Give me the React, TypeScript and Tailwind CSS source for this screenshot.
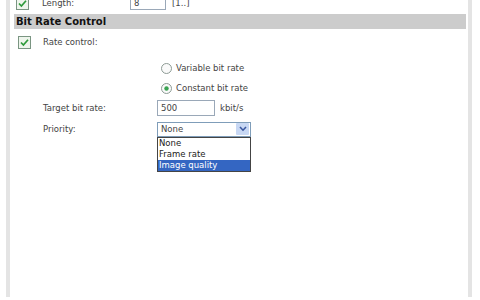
import React from "react";

function CheckBox() {
  return (
    <svg width="13" height="13" viewBox="0 0 13 13" className="shrink-0">
      <rect x="0.5" y="0.5" width="12" height="12" fill="#eef5ec" stroke="#7a9582" />
      <path d="M3 6.5 L5.4 9 L10 3.8" fill="none" stroke="#2d9a3a" strokeWidth="1.7" />
    </svg>
  );
}

function Radio({ checked }: { checked?: boolean }) {
  return (
    <svg width="11" height="11" viewBox="0 0 11 11" className="shrink-0">
      <circle cx="5.5" cy="5.5" r="5" fill="#fafafa" stroke="#8c9a94" />
      {checked && <circle cx="5.5" cy="5.5" r="2.2" fill="#3aa352" />}
    </svg>
  );
}

export default function App() {
  return (
    <div className="w-[480px] h-[300px] overflow-hidden bg-white font-['DejaVu_Sans',sans-serif] text-[8.5px] text-[#444]">
      <div className="ml-[6px] h-full w-[466px] border-x-[4px] border-[#e4e4e4] pl-[4px] pr-[2px]">
        {/* row scrolled partly out of view */}
        <div className="-mt-[3px] flex h-[13px] items-center">
          <div className="ml-[2px]">
            <CheckBox />
          </div>
          <span className="ml-[13px] w-[88px]">Length:</span>
          <div className="flex h-[13px] w-[36px] items-center border border-[#9aa8b8] px-[3px]">8</div>
          <span className="ml-[6px]">[1..]</span>
        </div>

        <div className="mt-[4px] flex h-[15px] items-center bg-[#cccccc] px-[2px] text-[10px] font-bold text-[#111]">
          Bit Rate Control
        </div>

        <div className="mt-[6px] flex h-[14px] items-center">
          <div className="ml-[4px]">
            <CheckBox />
          </div>
          <span className="ml-[12px]">Rate control:</span>
        </div>

        <div className="mt-[12px] flex h-[14px] items-center pl-[147px]">
          <Radio />
          <span className="ml-[4px]">Variable bit rate</span>
        </div>
        <div className="mt-[6px] flex h-[14px] items-center pl-[147px]">
          <Radio checked />
          <span className="ml-[4px]">Constant bit rate</span>
        </div>

        <div className="mt-[5px] flex h-[16px] items-center">
          <span className="ml-[29px] w-[114px]">Target bit rate:</span>
          <div className="flex h-[16px] w-[58px] items-center border border-[#9aa8b8] px-[3px]">500</div>
          <span className="ml-[5px]">kbit/s</span>
        </div>

        <div className="mt-[5px] flex h-[16px] items-center">
          <span className="ml-[29px] w-[114px]">Priority:</span>
          <div className="relative w-[94px]">
            <div className="flex h-[15px] items-center justify-between border border-[#7f9db9] pl-[3px] pr-[1px]">
              <span>None</span>
              <div className="flex h-[12px] w-[13px] items-center justify-center rounded-[1px] bg-[#c8d8f4]">
                <svg width="8" height="6" viewBox="0 0 8 6">
                  <path d="M1 1 L4 4.2 L7 1" fill="none" stroke="#3a57a0" strokeWidth="1.6" />
                </svg>
              </div>
            </div>
            <div className="absolute left-0 top-full w-[94px] border border-[#444] bg-white text-[#222]">
              <div className="h-[11px] px-[1px] leading-[11px]">None</div>
              <div className="h-[11px] px-[1px] leading-[11px]">Frame rate</div>
              <div className="h-[11px] bg-[#3466c2] px-[1px] leading-[11px] text-white">Image quality</div>
            </div>
          </div>
        </div>
      </div>
    </div>
  );
}
